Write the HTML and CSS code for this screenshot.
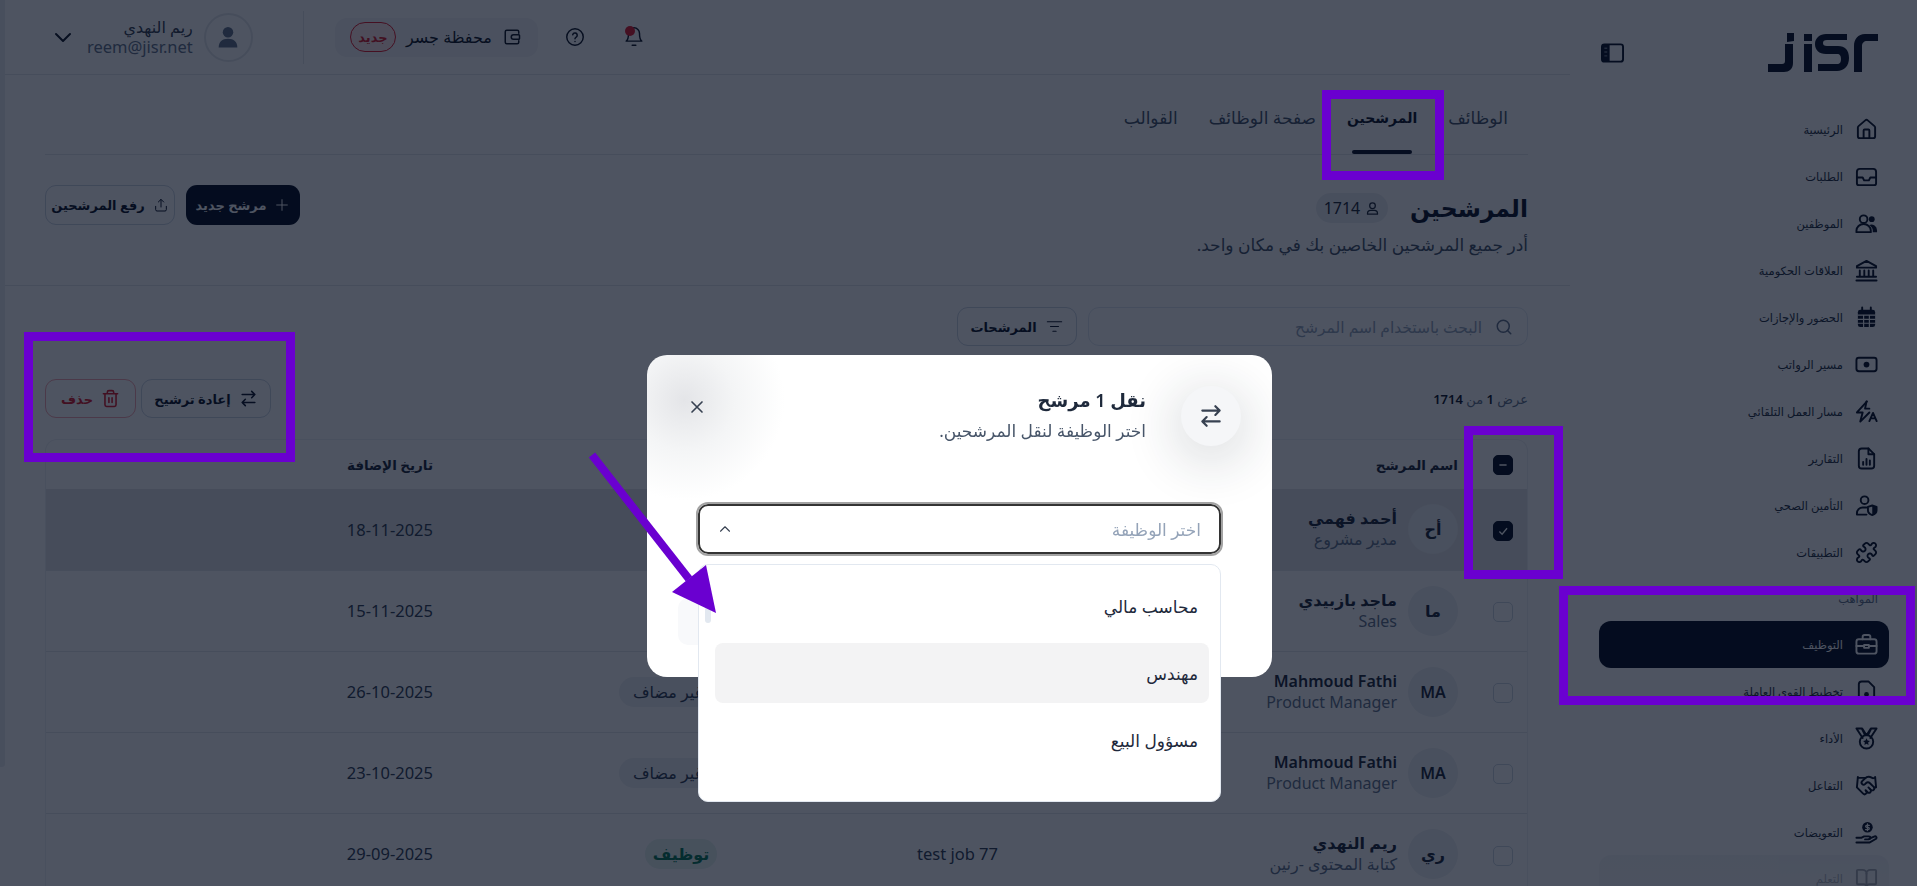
FILE: index.html

```html
<!DOCTYPE html>
<html lang="ar" dir="rtl">

<head>
    <meta charset="UTF-8">
    <meta name="viewport" content="width=device-width, initial-scale=1.0">
    <title>المرشحين</title>
    <link rel="stylesheet" href="styles.css">
</head>

<body>
    <div class="app">
        <aside class="sidebar">
            <div class="sidebar-top">
                <svg class="logo" viewBox="0 0 110 39" fill="#0a1325">
                    <path d="M0 31h14c2 0 3-1 3-3V11h8v19c0 6-4 9-9 9H0z"/>
                    <path d="M19 0h7v8l-7 1z"/>
                    <rect x="36" y="1" width="8" height="7"/>
                    <rect x="36" y="11" width="8" height="28"/>
                    <path d="M79 2v6H59c-3 0-4 1-4 3s1 3 4 3h11c7 0 11 4 11 12s-5 13-12 13H50v-7h19c3 0 4-2 4-5s-1-5-4-5H58c-7 0-11-4-11-10S52 2 58 2z" transform="translate(0 -1)"/>
                    <path d="M86 39V13c0-7 4-12 11-12h13v7H99c-3 0-5 2-5 5v26z"/>
                </svg>
                <svg class="panel-icon" viewBox="0 0 24 20"><rect x="1" y="1" width="22" height="18" rx="2.5" fill="none" stroke="#0a1325" stroke-width="2"/><path d="M1 3.500a2.500 2.500 0 0 1 2.500-2.500H9v18H3.500A2.500 2.500 0 0 1 1 16.500z" fill="#0a1325"/><path d="M3.500 5h3M3.500 9h3M3.500 13h3" stroke="#6b7280" stroke-width="1.500"/></svg>
            </div>

            <nav class="nav">
                <a class="nav-item"><svg class="icon" viewBox="0 0 24 24"><path d="M15 21v-8a1 1 0 0 0-1-1h-4a1 1 0 0 0-1 1v8"/><path d="M3 10a2 2 0 0 1 .709-1.528l7-5.999a2 2 0 0 1 2.582 0l7 5.999A2 2 0 0 1 21 10v9a2 2 0 0 1-2 2H5a2 2 0 0 1-2-2z"/></svg>الرئيسية</a>
                <a class="nav-item"><svg class="icon" viewBox="0 0 24 24"><path d="M2 7a3 3 0 0 1 3-3h14a3 3 0 0 1 3 3v12a2 2 0 0 1-2 2H4a2 2 0 0 1-2-2z"/><path d="M2 13h6l1.500 3h5l1.500-3h6"/></svg>الطلبات</a>
                <a class="nav-item"><svg class="icon" viewBox="0 0 24 24"><circle cx="9" cy="7.500" r="4"/><circle class="solid" cx="17.500" cy="7.500" r="3"/><path d="M1.500 21v-1.500a7 6.500 0 0 1 15 0V21z"/><path class="solid" d="M15 13.500a6 6 0 0 1 8 5.500v2h-4.500v-2c0-2-1.500-4-3.500-5.500z"/></svg>الموظفين</a>
                <a class="nav-item"><svg class="icon" viewBox="0 0 24 24"><path d="M12 2 2 7.500V9h20V7.500z"/><path d="M5 12v6M9.700 12v6M14.300 12v6M19 12v6M2 18.500h20M1.500 22.500h21"/></svg>العلاقات الحكومية</a>
                <a class="nav-item"><svg class="icon" viewBox="0 0 24 24"><path d="M7.500 1.500v4M16.500 1.500v4"/><rect class="solid" x="3" y="4" width="18" height="18" rx="2.500"/><path class="cut" d="M3 9.500h18M3 14h18M3 18h18M9 10v12M15 10v12"/></svg>الحضور والإجازات</a>
                <a class="nav-item"><svg class="icon" viewBox="0 0 24 24"><rect x="1.500" y="5" width="21" height="14" rx="2.500"/><circle class="solid" cx="12" cy="12" r="3"/></svg>مسير الرواتب</a>
                <a class="nav-item"><svg class="icon" viewBox="0 0 24 24"><path d="M12.500 1.500 2 13h6l-2.500 9.500L15 13"/><path d="M12 1.500 10.500 9H15"/><path d="M15 22l3.800-8.500 3.800 8.500M16.300 19.200h5"/></svg>مسار العمل التلقائي</a>
                <a class="nav-item"><svg class="icon" viewBox="0 0 24 24"><path d="M14 1.500H7a3 3 0 0 0-3 3v15a3 3 0 0 0 3 3h10a3 3 0 0 0 3-3V7.500z"/><path d="M14 1.500v6h6"/><path d="M8.500 18.500v-3M12 18.500v-6M15.500 18.500v-4.500"/></svg>التقارير</a>
                <a class="nav-item"><svg class="icon" viewBox="0 0 24 24"><circle cx="10" cy="6.500" r="4"/><path d="M2 21.500v-1.500a6 6 0 0 1 6-6h4M2 21.500h10"/><path d="M18 12l4.500 1.500v3.500c0 2.500-2 4.200-4.500 5-2.500-.8-4.500-2.500-4.500-5v-3.500z"/><path class="solid" d="M18 12l4.500 1.500v3.500c0 2.500-2 4.200-4.500 5z"/></svg>التأمين الصحي</a>
                <a class="nav-item"><svg class="icon" viewBox="0 0 24 24"><path d="M19.439 7.850c-.049.322.059.648.289.878l1.568 1.568c.47.47.706 1.087.706 1.704s-.235 1.233-.706 1.704l-1.611 1.611a.98.98 0 0 1-.837.276c-.47-.07-.802-.48-.968-.925a2.501 2.501 0 1 0-3.214 3.214c.446.166.855.497.925.968a.979.979 0 0 1-.276.837l-1.610 1.610a2.404 2.404 0 0 1-1.705.707 2.402 2.402 0 0 1-1.704-.706l-1.568-1.568a1.026 1.026 0 0 0-.877-.29c-.493.074-.84.504-1.020.968a2.500 2.500 0 1 1-3.237-3.237c.464-.18.894-.527.967-1.020a1.026 1.026 0 0 0-.289-.877l-1.568-1.568A2.402 2.402 0 0 1 1.998 12c0-.617.236-1.234.706-1.704L4.230 8.770c.24-.24.581-.353.917-.303.515.077.877.528 1.073 1.010a2.500 2.500 0 1 0 3.259-3.259c-.482-.196-.933-.558-1.010-1.073-.05-.336.062-.676.303-.917l1.525-1.525A2.402 2.402 0 0 1 12 1.998c.617 0 1.234.236 1.704.706l1.568 1.568c.23.23.556.338.877.29.493-.074.84-.504 1.020-.968a2.500 2.500 0 1 1 3.237 3.237c-.464.18-.894.527-.967 1.020Z"/></svg>التطبيقات</a>

                <div class="nav-section">المواهب</div>

                <a class="nav-item active"><svg class="icon" viewBox="0 0 24 24"><rect x="1.500" y="6.500" width="21" height="15" rx="2.500"/><path d="M8 6.500V4a2 2 0 0 1 2-2h4a2 2 0 0 1 2 2v2.500"/><path d="M1.500 13.500h8M14.500 13.500h8M9.500 12.500h5v3h-5z"/></svg>التوظيف</a>
                <a class="nav-item"><svg class="icon" viewBox="0 0 24 24"><path d="M14 1.500H7a3 3 0 0 0-3 3v15a3 3 0 0 0 3 3h10a3 3 0 0 0 3-3V7.500z"/><circle class="solid" cx="12" cy="15" r="2.500"/></svg>تخطيط القوى العاملة</a>
                <a class="nav-item"><svg class="icon" viewBox="0 0 24 24"><path d="M1.500 1.500h6l4.500 7 4.500-7h6l-6.500 10M1.500 1.500 8 11.500M7 1.500l3.500 7M17 1.500l-3.500 7"/><circle cx="12" cy="15.500" r="7"/><path class="solid" d="m12 11.800 1.100 2.400 2.500.3-1.900 1.700.5 2.500-2.200-1.300-2.200 1.300.5-2.500-1.900-1.700 2.500-.3z"/></svg>الأداء</a>
                <a class="nav-item"><svg class="icon" viewBox="0 0 24 24"><path d="m11 17 2 2a1 1 0 1 0 3-3"/><path d="m14 14 2.500 2.500a1 1 0 1 0 3-3l-3.880-3.880a3 3 0 0 0-4.240 0l-.88.88a1 1 0 1 1-3-3l2.810-2.810a5.790 5.790 0 0 1 7.060-.87l.47.28a2 2 0 0 0 1.420.25L21 4"/><path d="m21 3 1 11h-2"/><path d="M3 3 2 14l6.500 6.500a1 1 0 1 0 3-3"/><path d="M3 4h8"/></svg>التفاعل</a>
                <a class="nav-item"><svg class="icon" viewBox="0 0 24 24"><circle class="solid" cx="13" cy="6.500" r="5.500"/><path class="cut thin" d="M15 4.500h-2.800a1.100 1.100 0 0 0 0 2.200h1.600a1.100 1.100 0 0 1 0 2.200H11M13 3v7"/><path d="M1.500 17.500h5l3-1.500h5a1.500 1.500 0 0 1 0 3.200H10.500"/><path d="M15 18.500l5.500-2.500a1.500 1.500 0 0 1 1.500 2.500L15 22.500H1.500"/></svg>التعويضات</a>
                <a class="nav-item faded"><svg class="icon" viewBox="0 0 24 24"><path d="M12 7v14"/><path d="M3 18a1 1 0 0 1-1-1V4a1 1 0 0 1 1-1h5a4 4 0 0 1 4 4 4 4 0 0 1 4-4h5a1 1 0 0 1 1 1v13a1 1 0 0 1-1 1h-6a3 3 0 0 0-3 3 3 3 0 0 0-3-3z"/></svg>التعلم</a>
            </nav>
        </aside>

        <main class="main">
            <header class="topbar">
                <button class="bell"><svg class="icon" viewBox="0 0 24 24"><path d="M6 8a6 6 0 0 1 12 0c0 7 2.500 8.500 2.500 8.500h-17S6 15 6 8"/><path d="M10 21h4"/></svg><span class="bell-dot"></span></button>
                <button class="help"><svg class="icon" viewBox="0 0 24 24"><circle cx="12" cy="12" r="9"/><path d="M9.500 9.500a2.500 2.500 0 0 1 4.900.8c0 1.700-2.400 2.200-2.400 3.700"/><path d="M12 17h.01"/></svg></button>
                <div class="wallet">
                    <svg class="icon" viewBox="0 0 24 24"><path d="M21 7V5a2 2 0 0 0-2-2H5a2 2 0 0 0-2 2v14a2 2 0 0 0 2 2h14a2 2 0 0 0 2-2v-2"/><path d="M14 9h7a1 1 0 0 1 1 1v4a1 1 0 0 1-1 1h-7a3 3 0 0 1 0-6z"/></svg>
                    <span class="wallet-name">محفظة جسر</span>
                    <span class="new-badge">جديد</span>
                </div>
                <div class="topbar-divider"></div>
                <div class="user-avatar"><svg viewBox="0 0 24 24"><circle cx="12" cy="8" r="4.500"/><path d="M4 21c0-5 3-7.500 8-7.500s8 2.500 8 7.500z"/></svg></div>
                <div class="user-info">
                    <div class="user-name">ريم النهدي</div>
                    <div class="user-mail">reem@jisr.net</div>
                </div>
                <svg class="icon user-chevron" viewBox="0 0 24 24"><path d="m5 9 7 7 7-7"/></svg>
            </header>

            <div class="content">
                <div class="tabs">
                    <a class="tab">الوظائف</a>
                    <a class="tab active">المرشحين</a>
                    <a class="tab">صفحة الوظائف</a>
                    <a class="tab">القوالب</a>
                </div>

                <div class="page-head">
                    <div>
                        <div class="title-row">
                            <h1>المرشحين</h1>
                            <span class="count-pill"><svg class="icon" viewBox="0 0 24 24"><circle cx="12" cy="7.500" r="4.500"/><path d="M4 21v-1a5 5 0 0 1 5-5h6a5 5 0 0 1 5 5v1z"/></svg>1714</span>
                        </div>
                        <p class="subtitle">أدر جميع المرشحين الخاصين بك في مكان واحد.</p>
                    </div>
                    <div class="head-actions">
                        <button class="btn btn-dark"><svg class="icon" viewBox="0 0 24 24"><path d="M12 4v16M4 12h16"/></svg>مرشح جديد</button>
                        <button class="btn btn-line"><svg class="icon" viewBox="0 0 24 24"><path d="M12 15V4M8 7.500 12 3.500l4 4"/><path d="M4 14v5a2 2 0 0 0 2 2h12a2 2 0 0 0 2-2v-5"/></svg>رفع المرشحين</button>
                    </div>
                </div>
            </div>

            <div class="page-line"></div>

            <div class="content">
                <div class="filters">
                    <div class="search"><svg class="icon" viewBox="0 0 24 24"><circle cx="11" cy="11" r="8"/><path d="m21 21-4.300-4.300"/></svg>البحث باستخدام اسم المرشح</div>
                    <button class="btn btn-line btn-filter"><svg class="icon" viewBox="0 0 24 24"><path d="M3 6h18M7 12h10M10 18h4"/></svg>المرشحات</button>
                </div>

                <div class="list-bar">
                    <div class="list-count">عرض <b>1</b> من <b>1714</b></div>
                    <div class="bulk">
                        <button class="btn btn-line btn-move"><svg class="icon" viewBox="0 0 24 24"><path d="m16 3 4 4-4 4M20 7H4M8 21l-4-4 4-4M4 17h16"/></svg>إعادة ترشيح</button>
                        <button class="btn btn-line btn-delete"><svg class="icon" viewBox="0 0 24 24"><path d="M3 6h18M19 6v14a2 2 0 0 1-2 2H7a2 2 0 0 1-2-2V6M8 6V4a2 2 0 0 1 2-2h4a2 2 0 0 1 2 2v2M10 11v6M14 11v6"/></svg>حذف</button>
                    </div>
                </div>

                <div class="table-box">
                    <table class="table">
                        <colgroup>
                            <col class="col-check"><col class="col-name"><col class="col-job"><col class="col-type"><col class="col-date"><col class="col-rest"><col class="col-last">
                        </colgroup>
                        <thead>
                            <tr>
                                <th><span class="check on"><svg viewBox="0 0 20 20"><path d="M6 10h8"/></svg></span></th>
                                <th class="name-head">اسم المرشح</th>
                                <th class="job-cell">الوظيفة</th>
                                <th class="type-cell">النوع</th>
                                <th class="date-cell">تاريخ الإضافة</th>
                                <th></th>
                                <th></th>
                            </tr>
                        </thead>
                        <tbody>
                            <tr class="selected">
                                <td><span class="check on"><svg viewBox="0 0 20 20"><path d="m6 10.500 3 3 5.500-6.500"/></svg></span></td>
                                <td><div class="person"><span class="avatar">أح</span><div><div class="person-name">أحمد فهمي</div><div class="person-role">مدير مشروع</div></div></div></td>
                                <td class="job-cell"></td>
                                <td class="type-cell"></td>
                                <td class="date-cell">18-11-2025</td>
                                <td></td>
                                <td></td>
                            </tr>
                            <tr>
                                <td><span class="check"></span></td>
                                <td><div class="person"><span class="avatar">ما</span><div><div class="person-name">ماجد بازبيدي</div><div class="person-role">Sales</div></div></div></td>
                                <td class="job-cell"></td>
                                <td class="type-cell"></td>
                                <td class="date-cell">15-11-2025</td>
                                <td></td>
                                <td></td>
                            </tr>
                            <tr>
                                <td><span class="check"></span></td>
                                <td><div class="person"><span class="avatar">MA</span><div><div class="person-name">Mahmoud Fathi</div><div class="person-role">Product Manager</div></div></div></td>
                                <td class="job-cell"></td>
                                <td class="type-cell"><span class="tag">غير مضاف</span></td>
                                <td class="date-cell">26-10-2025</td>
                                <td></td>
                                <td></td>
                            </tr>
                            <tr>
                                <td><span class="check"></span></td>
                                <td><div class="person"><span class="avatar">MA</span><div><div class="person-name">Mahmoud Fathi</div><div class="person-role">Product Manager</div></div></div></td>
                                <td class="job-cell"></td>
                                <td class="type-cell"><span class="tag">غير مضاف</span></td>
                                <td class="date-cell">23-10-2025</td>
                                <td></td>
                                <td></td>
                            </tr>
                            <tr>
                                <td><span class="check"></span></td>
                                <td><div class="person"><span class="avatar">ري</span><div><div class="person-name">ريم النهدي</div><div class="person-role">كتابة المحتوى -رنين</div></div></div></td>
                                <td class="job-cell">test job 77</td>
                                <td class="type-cell"><span class="tag tag-green">توظيف</span></td>
                                <td class="date-cell">29-09-2025</td>
                                <td></td>
                                <td></td>
                            </tr>
                        </tbody>
                    </table>
                </div>
            </div>
        </main>
    </div>

    <div class="scroll-thumb"></div>
    <div class="overlay"></div>

    <div class="modal">
        <div class="modal-head">
            <span class="modal-icon"><svg class="icon" viewBox="0 0 24 24"><path d="m16 3 4 4-4 4M20 7H4M8 21l-4-4 4-4M4 17h16"/></svg></span>
            <div class="modal-text">
                <h2>نقل 1 مرشح</h2>
                <p>اختر الوظيفة لنقل المرشحين.</p>
            </div>
            <button class="modal-close"><svg class="icon" viewBox="0 0 24 24"><path d="M18 6 6 18M6 6l12 12"/></svg></button>
        </div>
        <div class="select">
            <span>اختر الوظيفة</span>
            <svg class="icon" viewBox="0 0 24 24"><path d="m6 15 6-6 6 6"/></svg>
        </div>
        <div class="modal-ghost-btn"></div>
    </div>

    <div class="dropdown">
        <div class="option">محاسب مالي</div>
        <div class="option hover">مهندس</div>
        <div class="option">مسؤول البيع</div>
        <span class="dropdown-thumb"></span>
    </div>

    <!-- highlight boxes drawn over the screenshot -->
    <div class="mark mark-tab"></div>
    <div class="mark mark-bulk"></div>
    <div class="mark mark-check"></div>
    <div class="mark mark-nav"></div>
    <svg class="mark-arrow" viewBox="0 0 1917 886">
        <path d="M592 455 689 579" stroke="#6a00d0" stroke-width="8" fill="none"/>
        <path d="M706 565 672 592 716 613z" fill="#6a00d0"/>
    </svg>
</body>

</html>
```

FILE: styles.css

```css
* {
    box-sizing: border-box;
}

html,
body {
    margin: 0;
    height: 100%;
    overflow: hidden;
}

body {
    font-family: "Noto Sans", "DejaVu Sans", sans-serif;
    font-size: 14px;
    color: #111827;
    background: #fff;
}

button {
    font: inherit;
    color: inherit;
    background: none;
    border: 0;
    padding: 0;
}

.icon {
    width: 24px;
    height: 24px;
    flex: none;
    fill: none;
    stroke: currentColor;
    stroke-width: 2;
    stroke-linecap: round;
    stroke-linejoin: round;
}

.icon .solid {
    fill: currentColor;
    stroke: none;
}

.icon .cut {
    stroke: #fff;
    stroke-width: 1.2;
}

.icon .thin {
    stroke-width: 1.3;
}

.app {
    display: flex;
    height: 886px;
}

/* sidebar */
.sidebar {
    width: 347px;
    flex: none;
    padding: 33px 28px 0 29px;
    overflow: hidden;
}

.sidebar-top {
    display: flex;
    justify-content: space-between;
    height: 40px;
    margin-bottom: 33px;
    padding-right: 11px;
}

.logo {
    width: 110px;
    height: 39px;
}

.panel-icon {
    width: 23px;
    height: 20px;
    margin-top: 10px;
    margin-left: 2px;
}

.nav {
    display: flex;
    flex-direction: column;
}

.nav-item {
    display: flex;
    align-items: center;
    gap: 12px;
    height: 47px;
    padding-right: 11px;
    border-radius: 12px;
    font-size: 11.500px;
    color: #273142;
    flex: none;
}

.nav-item .icon {
    width: 23px;
    height: 23px;
    color: #0a1325;
}

.nav-item.active {
    background: #081022;
    color: #fff;
}

.nav-item.active .icon {
    color: #fff;
}

.nav-item.faded {
    opacity: .35;
    background: linear-gradient(#e5e7eb, #eef0f3);
    margin-top: -1px;
}

.nav-section {
    height: 45px;
    padding: 14px 11px 0 0;
    font-size: 11.500px;
    line-height: 18px;
    color: #64748b;
}

/* top bar */
.main {
    flex: 1;
    min-width: 0;
}

.topbar {
    display: flex;
    align-items: center;
    justify-content: flex-end;
    height: 75px;
    padding-left: 51px;
    border-bottom: 1px solid #e5e7eb;
}

.bell {
    position: relative;
    display: flex;
    margin-left: 37px;
}

.bell .icon {
    width: 22px;
    height: 22px;
    stroke-width: 1.600;
}

.bell-dot {
    position: absolute;
    top: 0;
    right: 10px;
    width: 10px;
    height: 10px;
    border-radius: 50%;
    background: #e11d2e;
}

.help {
    display: flex;
    margin-left: 26px;
}

.help .icon {
    width: 22px;
    height: 22px;
    stroke-width: 1.600;
}

.wallet {
    display: flex;
    align-items: center;
    width: 203px;
    height: 39px;
    padding: 0 17px 0 14px;
    border-radius: 12px;
    background: #f4f5f7;
    font-size: 16px;
    margin-left: 31px;
}

.wallet .icon {
    width: 18px;
    height: 18px;
    margin-left: 11px;
}

.wallet-name {
    white-space: nowrap;
    margin-left: 10px;
}

.new-badge {
    display: flex;
    align-items: center;
    justify-content: center;
    width: 46px;
    height: 30px;
    border: 1px solid #e11d2e;
    border-radius: 15px;
    background: #fde8e8;
    color: #d81c2c;
    font-size: 13px;
    font-weight: 700;
}

.topbar-divider {
    width: 1px;
    height: 53px;
    background: #e5e7eb;
    margin-left: 50px;
}

.user-avatar {
    width: 49px;
    height: 49px;
    border: 2px solid #e5e7eb;
    border-radius: 50%;
    display: flex;
    align-items: center;
    justify-content: center;
    margin-left: 11px;
}

.user-avatar svg {
    width: 28px;
    height: 28px;
    fill: #64748b;
}

.user-info {
    margin-left: 12px;
    line-height: 20px;
}

.user-name {
    font-size: 16px;
    color: #374151;
}

.user-mail {
    font-size: 16.500px;
    color: #64748b;
}

/* page */
.content {
    padding: 0 42px 0 45px;
}

.tabs {
    display: flex;
    height: 80px;
    gap: 31px;
    padding-right: 20px;
    border-bottom: 1px solid #e5e7eb;
}

.tab {
    position: relative;
    padding-top: 31px;
    font-size: 17px;
    line-height: 24px;
    color: #475569;
}

.tab.active {
    color: #0f172a;
    font-size: 14px;
    font-weight: 600;
}

.tab.active::after {
    content: "";
    position: absolute;
    right: 5px;
    left: 5px;
    bottom: 0;
    height: 4px;
    border-radius: 2px;
    background: #0f172a;
}

.page-head {
    display: flex;
    justify-content: space-between;
    align-items: flex-start;
    height: 130px;
    padding-top: 30px;
}

.title-row {
    display: flex;
    align-items: center;
    gap: 22px;
    height: 46px;
}

h1 {
    margin: 0;
    font-size: 23.500px;
    font-weight: 600;
    color: #0f172a;
}

.count-pill {
    display: flex;
    align-items: center;
    justify-content: center;
    gap: 5px;
    width: 72px;
    height: 30px;
    border-radius: 15px;
    background: #eceef1;
    font-size: 16px;
    color: #1f2937;
}

.count-pill .icon {
    width: 15px;
    height: 15px;
}

.subtitle {
    margin: 2px 0 0;
    font-size: 17px;
    line-height: 24px;
    color: #475569;
}

.head-actions {
    display: flex;
    gap: 11px;
}

.btn {
    display: flex;
    align-items: center;
    justify-content: center;
    gap: 8px;
    height: 40px;
    padding: 0 13px;
    border-radius: 11px;
    font-size: 13px;
    font-weight: 600;
    white-space: nowrap;
}

.btn .icon {
    width: 16px;
    height: 16px;
    stroke-width: 1.5;
}

.btn-dark {
    width: 114px;
    background: #081022;
    color: #fff;
}

.btn-line {
    width: 130px;
    border: 1px solid #cbd5e1;
    color: #0f172a;
}

.page-line {
    height: 1px;
    background: #e5e7eb;
}

.filters {
    display: flex;
    gap: 11px;
    padding-top: 21px;
}

.search {
    display: flex;
    align-items: center;
    gap: 13px;
    width: 440px;
    height: 39px;
    padding-right: 14px;
    border: 1px solid #e2e8f0;
    border-radius: 11px;
    font-size: 15.500px;
    color: #94a3b8;
}

.search .icon {
    width: 18px;
    height: 18px;
    color: #64748b;
}

.btn-filter {
    width: 120px;
    height: 39px;
}

.btn-filter .icon {
    width: 19px;
    height: 19px;
}

.list-bar {
    display: flex;
    justify-content: space-between;
    align-items: center;
    height: 39px;
    margin-top: 33px;
}

.list-count {
    font-size: 13px;
    color: #64748b;
}

.list-count b {
    color: #0f172a;
    font-weight: 600;
}

.bulk {
    display: flex;
    gap: 5px;
}

.btn-move {
    width: 130px;
    height: 39px;
}

.btn-delete {
    width: 91px;
    height: 39px;
    border-color: #f6a5ad;
    color: #d81c2c;
}

.btn-move .icon,
.btn-delete .icon {
    width: 19px;
    height: 19px;
    stroke-width: 2;
}

/* table */
.table-box {
    margin-top: 21px;
    border: 1px solid #eef0f3;
    border-bottom: 0;
    border-radius: 12px 12px 0 0;
    overflow: hidden;
}

.table {
    width: 100%;
    table-layout: fixed;
    border-collapse: collapse;
}

.col-check {
    width: 49px;
}

.col-name {
    width: 458px;
}

.col-job {
    width: 283px;
}

.col-type {
    width: 284px;
}

.col-date {
    width: 255px;
}

.col-rest {
    width: 0;
}

th {
    height: 49px;
    padding: 0;
    font-size: 13.500px;
    font-weight: 600;
    text-align: right;
    color: #1e293b;
}

td {
    height: 81px;
    padding: 0;
    border-top: 1px solid #e5e7eb;
    font-size: 16.500px;
    color: #334155;
}

tr.selected td {
    background: #e3e5e6;
    border-top: 0;
}

th:first-child,
td:first-child {
    text-align: center;
}

.check {
    display: inline-flex;
    width: 20px;
    height: 20px;
    border: 1px solid #cbd5e1;
    border-radius: 5px;
    vertical-align: middle;
}

.check.on {
    background: #081022;
    border-color: #081022;
}

.check svg {
    width: 18px;
    height: 18px;
    fill: none;
    stroke: #fff;
    stroke-width: 1.5;
}

.name-head {
    padding-right: 20px;
}

.person {
    display: flex;
    align-items: center;
    gap: 11px;
    padding-right: 20px;
}

.avatar {
    display: flex;
    align-items: center;
    justify-content: center;
    width: 50px;
    height: 50px;
    flex: none;
    border-radius: 50%;
    background: #eef0f3;
    font-size: 16px;
    font-weight: 600;
    color: #1e293b;
}

.person-name {
    font-size: 16px;
    line-height: 21px;
    font-weight: 600;
    color: #1e293b;
}

.person-role {
    font-size: 16px;
    line-height: 21px;
    color: #64748b;
}

.job-cell {
    padding-right: 22px;
}

.type-cell {
    padding-right: 20px;
}

.date-cell {
    padding-right: 20px;
}

.tag {
    display: inline-flex;
    align-items: center;
    justify-content: center;
    width: 98px;
    height: 30px;
    border-radius: 15px;
    background: #eef0f3;
    font-size: 16px;
    color: #334155;
}

.tag-green {
    width: 72px;
    background: #e6f4ef;
    color: #0b7a57;
    font-weight: 600;
}

.scroll-thumb {
    position: absolute;
    top: 0;
    left: 0;
    width: 5px;
    height: 767px;
    border-radius: 0 0 3px 0;
    background: #eceef2;
}

/* modal */
.overlay {
    position: fixed;
    inset: 0;
    background: rgba(3, 12, 30, .7);
}

.modal {
    position: absolute;
    top: 355px;
    left: 647px;
    width: 625px;
    height: 322px;
    padding: 31px 31px 0 51px;
    border-radius: 20px;
    background: radial-gradient(circle at 6% 14%, #e4e5e8 0, #f4f5f6 50px, #fff 100px);
    overflow: hidden;
}

.modal-head {
    display: flex;
    align-items: flex-start;
    height: 118px;
}

.modal-icon {
    display: flex;
    align-items: center;
    justify-content: center;
    width: 60px;
    height: 60px;
    border-radius: 50%;
    background: #f5f6f8;
    box-shadow: 0 10px 50px 10px rgba(30, 41, 59, .14);
    color: #374151;
}

.modal-icon .icon {
    width: 26px;
    height: 26px;
}

.modal-text {
    flex: 1;
    margin-right: 35px;
    margin-top: -2px;
}

h2 {
    margin: 0;
    font-size: 18px;
    line-height: 32px;
    font-weight: 600;
    color: #1e293b;
}

.modal-text p {
    margin: 0;
    font-size: 17px;
    line-height: 30px;
    color: #475569;
}

.modal-close {
    display: flex;
    margin: 11px 0 0 -11px;
    color: #374151;
}

.modal-close .icon {
    width: 20px;
    height: 20px;
}

.select {
    display: flex;
    justify-content: space-between;
    align-items: center;
    width: 523px;
    height: 50px;
    padding: 0 18px 0 16px;
    border: 2px solid #333;
    border-radius: 10px;
    outline: 2px solid #a3a3a3;
    font-size: 17px;
    color: #94a3b8;
    margin-right: 20px;
}

.select .icon {
    width: 18px;
    height: 18px;
    stroke-width: 1.5;
    color: #374151;
}

.modal-ghost-btn {
    position: absolute;
    top: 243px;
    left: 31px;
    width: 100px;
    height: 47px;
    border-radius: 10px;
    background: #f8f9fb;
}

.dropdown {
    position: absolute;
    top: 564px;
    left: 698px;
    width: 523px;
    height: 238px;
    padding: 11px 11px 0 16px;
    border: 1px solid #e2e8f0;
    border-radius: 10px;
    background: #fff;
}

.option {
    display: flex;
    align-items: center;
    height: 60px;
    margin: 0 0 7px;
    padding: 0 11px;
    border-radius: 8px;
    font-size: 17px;
    color: #1e293b;
}

.option.hover {
    background: #f3f3f4;
}

.dropdown-thumb {
    position: absolute;
    top: 42px;
    left: 6px;
    width: 6px;
    height: 16px;
    border-radius: 3px;
    background: #e2e8f0;
}

/* annotations */
.mark {
    position: absolute;
    border: 9px solid #6a00d0;
}

.mark-tab {
    top: 90px;
    left: 1322px;
    width: 122px;
    height: 90px;
}

.mark-bulk {
    top: 332px;
    left: 24px;
    width: 271px;
    height: 130px;
}

.mark-check {
    top: 426px;
    left: 1464px;
    width: 99px;
    height: 153px;
}

.mark-nav {
    top: 586px;
    left: 1559px;
    width: 356px;
    height: 119px;
}

.mark-arrow {
    position: absolute;
    top: 0;
    left: 0;
    width: 1917px;
    height: 886px;
    pointer-events: none;
}
```
